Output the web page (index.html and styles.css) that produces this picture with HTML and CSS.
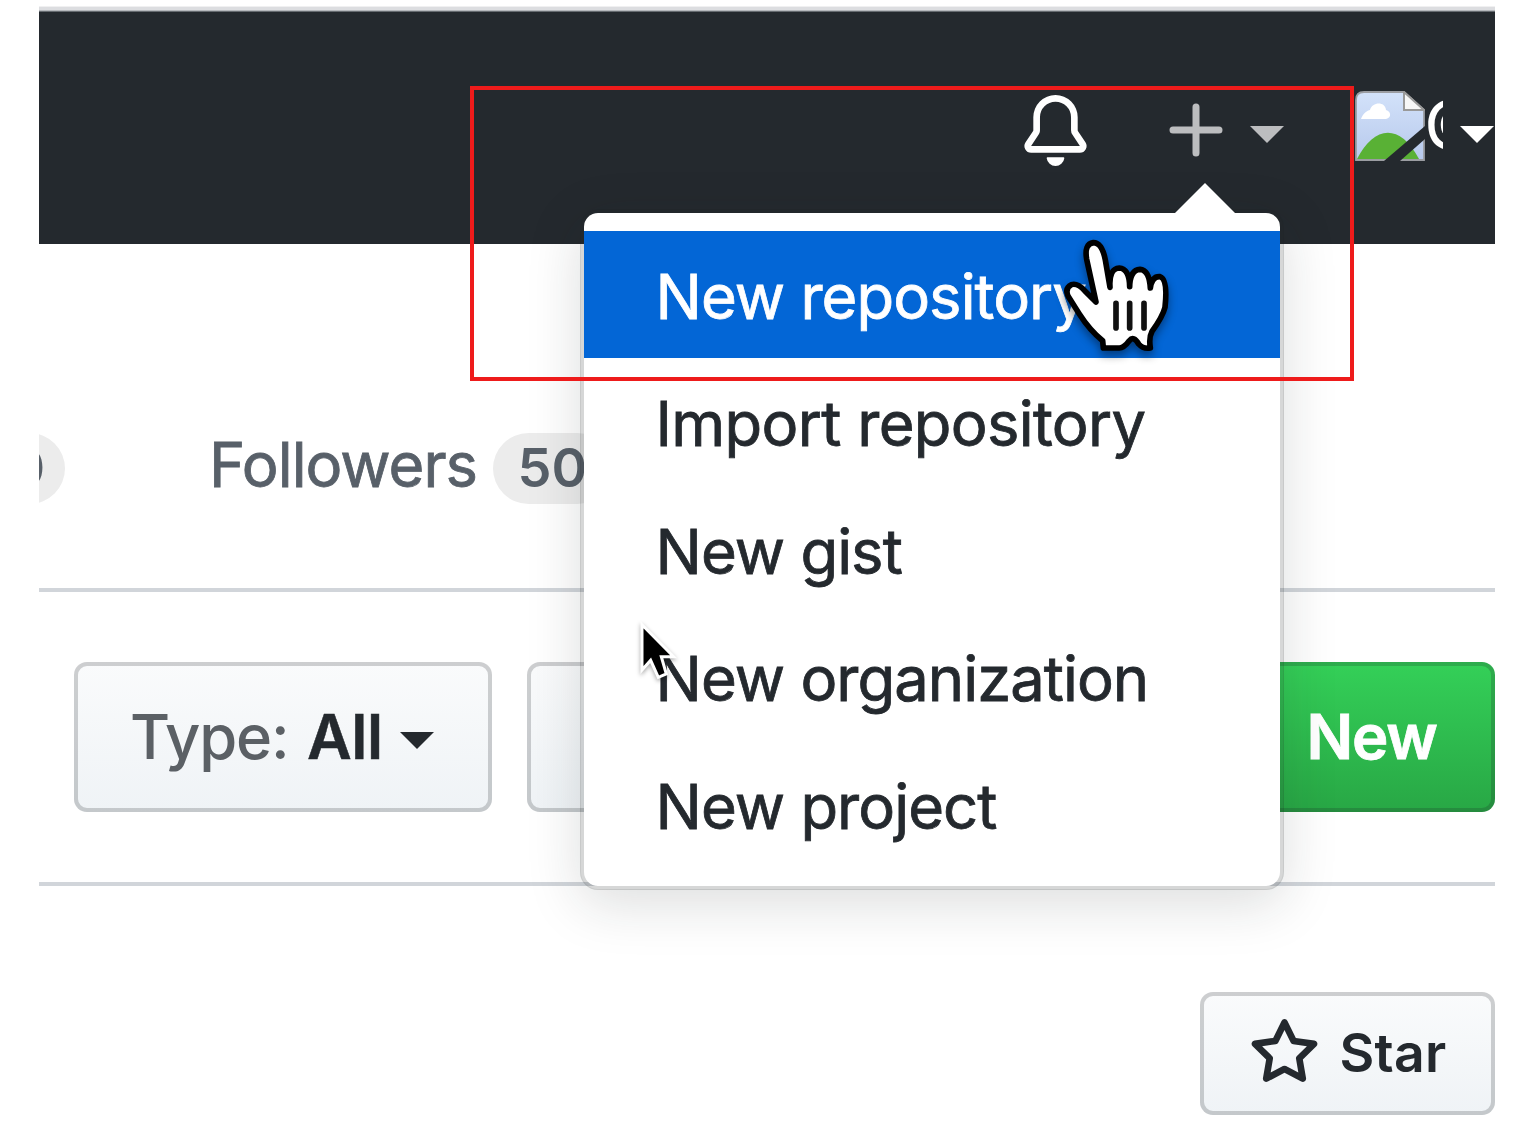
FILE: index.html
```html
<!DOCTYPE html>
<html lang="en">
<head>
<meta charset="utf-8">
<title>Repositories</title>
<link rel="stylesheet" href="styles.css">
</head>
<body>
<div class="page">
  <div class="topline"></div>
  <header class="header">
    <svg class="bell" viewBox="0 0 16 16" fill="#fff" fill-rule="evenodd"><path d="M8 16a2 2 0 001.985-1.75c.017-.137-.097-.25-.235-.25h-3.5c-.138 0-.252.113-.235.25A2 2 0 008 16z"/><path d="M8 1.5A3.5 3.5 0 004.500 5v2.947c0 .346-.102.683-.294.97l-1.703 2.556a.018.018 0 00-.003.01l.001.006c0 .002.002.004.004.006a.017.017 0 00.006.004l.007.001h10.964l.007-.001a.016.016 0 00.006-.004.016.016 0 00.004-.006l.001-.007a.017.017 0 00-.003-.01l-1.703-2.554a1.750 1.750 0 01-.294-.97V5A3.500 3.500 0 008 1.500zM3 5a5 5 0 0110 0v2.947c0 .05.015.098.042.139l1.703 2.555A1.518 1.518 0 0113.482 13H2.518a1.518 1.518 0 01-1.263-2.360l1.703-2.554A.250.250 0 003 7.947V5z"/></svg>
    <svg class="plus" viewBox="0 0 54 54"><path d="M27 4v46M4 27h46" stroke="#bcbdbf" stroke-width="7" stroke-linecap="round" fill="none"/></svg>
    <i class="caret caret-muted"></i>
    <div class="avatar">
      <svg class="broken" viewBox="0 0 70 70">
        <defs><linearGradient id="sky" x1="0" y1="0" x2="0" y2="1"><stop offset="0" stop-color="#d3e2fa"/><stop offset="1" stop-color="#b7c9ec"/></linearGradient></defs>
        <path d="M9 1H49L69 19V69H1V9Q1 1 9 1Z" fill="url(#sky)" stroke="#9b9da2" stroke-width="1.800"/>
        <path d="M2 68C18 36 44 30 64 68Z" fill="#59b135"/>
        <path d="M12 28H31C37 27 36 20 31 19C30 10 17 11 15 19C10 20 7 25 6 28Z" fill="#fff"/>
        <path d="M49 1V19H69Z" fill="#f7f7f7" stroke="#999" stroke-width="2"/>
        <path d="M70 35V48L45 70H29Z" fill="#24292e"/>
      </svg>
      <span class="alt">@</span>
    </div>
    <i class="caret"></i>
  </header>

  <nav class="tabs">
    <span class="counter counter-cut">0</span>
    <span class="tab">Followers</span>
    <span class="counter">50</span>
  </nav>

  <section class="filters">
    <div class="btn"><span class="label">Type:</span><b class="value">All</b><i class="caret caret-dark"></i></div>
    <div class="btn btn-lang"></div>
    <div class="btn btn-new">New</div>
  </section>

  <section class="repo">
    <div class="btn btn-star">
      <svg class="star" viewBox="0 0 16 16" fill="#24292e" fill-rule="evenodd"><path d="M8 .25a.75.75 0 01.673.418l1.882 3.815 4.210.612a.75.75 0 01.416 1.279l-3.046 2.970.719 4.192a.75.75 0 01-1.088.791L8 12.347l-3.766 1.980a.75.75 0 01-1.088-.79l.72-4.194L.818 6.374a.75.75 0 01.416-1.280l4.210-.611L7.327.668A.75.75 0 018 .25zm0 2.445L6.615 5.500a.75.75 0 01-.564.41l-3.097.45 2.240 2.184a.75.75 0 01.216.664l-.528 3.084 2.769-1.456a.75.75 0 01.698 0l2.770 1.456-.53-3.084a.75.75 0 01.216-.664l2.240-2.183-3.096-.45a.75.75 0 01-.564-.41L8 2.694v.001z"/></svg>
      <span class="star-label">Star</span>
    </div>
  </section>

  <div class="menu">
    <a class="item active">New repository</a>
    <a class="item import">Import repository</a>
    <a class="item">New gist</a>
    <a class="item">New organization</a>
    <a class="item">New project</a>
  </div>

  <div class="highlight"></div>

  <svg class="hand" viewBox="0 0 780 540">
    <path d="M190 384L188 362Q150 332 118 282L84 228Q74 204 94 194Q112 188 134 212L168 246L140 118Q132 72 160 68Q186 68 196 120L210 202Q206 146 238 144Q268 146 269 200Q270 150 300 148Q328 150 331 204Q336 168 360 170Q384 178 375 262Q368 290 336 334Q326 352 331 384Q310 388 296 372Q281 346 268 362Q252 384 238 384Z" fill="#fff" stroke="#000" stroke-width="17" stroke-linejoin="round"/>
    <path d="M228 250V324M269 250V324M312 250V324" stroke="#111" stroke-width="17" stroke-linecap="round"/>
  </svg>

  <svg class="arrow" viewBox="530 650 130 200">
    <path d="M545 673L640 769H603L618 821L594 831L571 780L545 809Z" fill="#000" stroke="#fff" stroke-width="9"/>
  </svg>
</div>
</body>
</html>
```
FILE: styles.css
```css
* { box-sizing: border-box; }

body {
  margin: 0;
  background: #fff;
  font-family: Inter, "Liberation Sans", sans-serif;
  color: #24292e;
}

.page {
  position: relative;
  width: 1456px;
  height: 1134px;
  margin-left: 39px;
  padding-top: 6px;
  overflow: hidden;
  font-size: 61.500px;
  line-height: 76px;
  white-space: nowrap;
}

.topline {
  height: 6px;
  background: linear-gradient(#f0f0f1 0 1px, #dcdde0 1px 4px, #b5b8bc 4px 5px, #666b70 5px);
}

.header {
  display: flex;
  height: 232px;
  padding-top: 79px;
  background: #24292e;
}

.bell { width: 71px; height: 71px; margin: 3.500px 0 0 980.500px; }
.plus { width: 54px; height: 54px; margin: 12px 0 0 78.500px; }

.caret {
  width: 0;
  height: 0;
  margin-top: 34.500px;
  border: 17.500px solid transparent;
  border-top-color: #fff;
  border-bottom: 0;
}

.caret-muted { margin-left: 26.500px; border-top-color: #bcbdbf; }

.avatar {
  display: flex;
  width: 88px;
  height: 75px;
  margin-left: 71px;
  margin-right: 17.500px;
  overflow: hidden;
}

.broken { flex: none; width: 70px; height: 70px; }

.alt {
  margin: -5px 0 0 1px;
  font-size: 56px;
  font-weight: 600;
  line-height: 67px;
  color: #fff;
}

.tabs {
  display: flex;
  height: 348px;
  padding-top: 189px;
  border-bottom: 4px solid #d1d5da;
  color: #586069;
}

.tab {
  width: 266px;
  margin: -6px 17.500px 0 144px;
  letter-spacing: -1px;
  -webkit-text-stroke: .8px;
}

.counter {
  width: 120px;
  height: 71px;
  padding-left: 25px;
  border-radius: 36px;
  background: #ececec;
  font-size: 54px;
  font-weight: 600;
  line-height: 69px;
}

.counter-cut {
  margin-left: -94px;
  padding: 0 20px 0 0;
  text-align: right;
}

.filters {
  display: flex;
  height: 294px;
  padding: 70px 0 0 35px;
  border-bottom: 4px solid #d1d5da;
}

.btn {
  display: flex;
  width: 418px;
  height: 150px;
  padding: 33px 0 0 52px;
  border: 4px solid rgba(27, 31, 35, .2);
  border-radius: 13px;
  background: linear-gradient(#fafbfc, #eff3f6) border-box;
}

.label { width: 177px; font-weight: 500; letter-spacing: -1.200px; color: #5b6065; }
.value { width: 93px; font-weight: 600; letter-spacing: -.4px; -webkit-text-stroke: .5px; }
.caret-dark { margin-top: 33px; border-top-color: #24292e; }
.btn-lang { margin-left: 35px; }

.btn-new {
  width: 300px;
  margin-left: 250px;
  padding-left: 107.500px;
  background: linear-gradient(#34d058, #28a745) border-box;
  color: #fff;
  font-weight: 600;
  letter-spacing: -1.200px;
  -webkit-text-stroke: .8px;
}

.repo { padding: 106px 0 0 1161px; }

.btn-star {
  width: 295px;
  height: 123px;
  padding: 22px 0 0 44.500px;
  font-size: 53.500px;
  font-weight: 600;
}

.star { width: 71px; height: 71px; margin-right: 20px; }
.star-label { margin-top: -3px; letter-spacing: .3px; }

.menu {
  position: absolute;
  left: 541px;
  top: 209px;
  width: 704px;
  height: 681px;
  padding-top: 18px;
  border: 4px solid rgba(27, 31, 35, .18);
  border-radius: 18px;
  background: #fff padding-box;
  box-shadow: 0 14px 54px rgba(27, 31, 35, .15);
}

.menu::before {
  content: "";
  position: absolute;
  left: 589.500px;
  top: -30px;
  border: 31px solid transparent;
  border-top: 0;
  border-bottom-color: #fff;
}

.item {
  display: block;
  height: 127.400px;
  padding-left: 71.500px;
  line-height: 132.500px;
  letter-spacing: -.95px;
  -webkit-text-stroke: .8px;
}

.import { letter-spacing: -.68px; }
.active { background: #0366d6; color: #fff; }

.highlight {
  position: absolute;
  left: 431px;
  top: 86px;
  width: 884px;
  height: 295px;
  border: 4.500px solid #ee1b1b;
}

.hand {
  position: absolute;
  left: 1001px;
  top: 220px;
  width: 260px;
  height: 180px;
  filter: drop-shadow(0 5px 4px rgba(0, 0, 0, .4));
}

.arrow {
  position: absolute;
  left: 597.700px;
  top: 616.700px;
  width: 43.300px;
  height: 66.700px;
  filter: drop-shadow(0 2px 2px rgba(0, 0, 0, .35));
}
```
